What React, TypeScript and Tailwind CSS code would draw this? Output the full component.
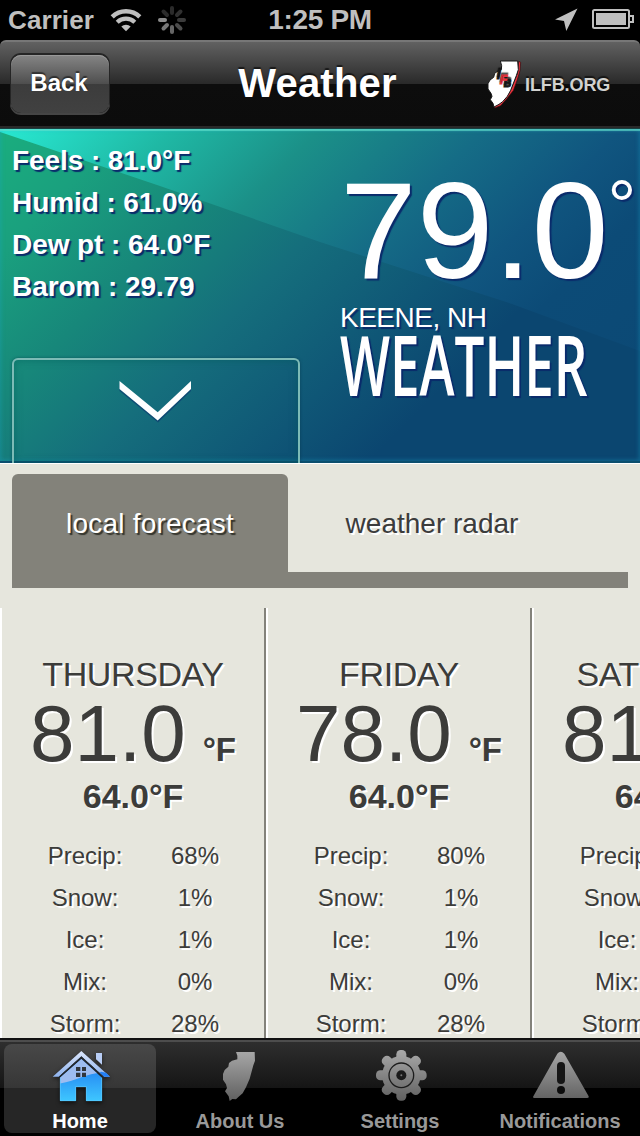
import React from "react";

interface Day {
    name: string;
    high: string;
    low: string;
    details: [string, string][];
}

const conditions = [
    "Feels : 81.0°F",
    "Humid : 61.0%",
    "Dew pt : 64.0°F",
    "Barom : 29.79",
];

const makeDetails = (precip: string): [string, string][] => [
    ["Precip:", precip],
    ["Snow:", "1%"],
    ["Ice:", "1%"],
    ["Mix:", "0%"],
    ["Storm:", "28%"],
];

const days: Day[] = [
    { name: "THURSDAY", high: "81.0", low: "64.0°F", details: makeDetails("68%") },
    { name: "FRIDAY", high: "78.0", low: "64.0°F", details: makeDetails("80%") },
    { name: "SATURDAY", high: "81.0", low: "64.0°F", details: makeDetails("68%") },
];

const STATE_PATH =
    "M708 66H764L765 92L760 106L749 146L738 172L728 190L716 200L708 208L697 207L689 213L686 199L675 184L681 174L678 163L669 149V132L674 120L685 110L687 99L696 92L712 88V77Z";

const StatusBar = () => (
    <div className="grid grid-cols-3 items-center h-10 bg-black text-[#bfbfbf] font-bold">
        <div className="flex items-center pl-2">
            <span className="text-[26px] leading-10 tracking-[0.1px]">Carrier</span>
            <svg className="ml-4 mb-px" width="32" height="24" viewBox="0 0 32 24" fill="none" stroke="#bfbfbf">
                <path d="M2.200 8.800a19.800 19.800 0 0 1 27.600 0" strokeWidth="4.500" />
                <path d="M7.200 14.300a12.600 12.600 0 0 1 17.600 0" strokeWidth="4.200" />
                <path d="M11.300 18.600a6.600 6.600 0 0 1 9.400 0L16 23.300z" fill="#bfbfbf" stroke="none" />
            </svg>
            <svg className="ml-4" width="28" height="28" viewBox="-14 -14 28 28" strokeWidth="4" strokeLinecap="round">
                <path d="M0-7V-12" stroke="#2b2b2b" />
                <path d="M5-5L8.5-8.5" stroke="#303030" />
                <path d="M7 0H12" stroke="#3b3b3b" />
                <path d="M5 5L8.5 8.5" stroke="#4c4c4c" />
                <path d="M0 7V12" stroke="#666" />
                <path d="M-5 5L-8.5 8.5" stroke="#777" />
                <path d="M-7 0H-12" stroke="#8d8d8d" />
                <path d="M-5-5L-8.5-8.5" stroke="#2b2b2b" />
            </svg>
        </div>
        <span className="text-center text-[28px] leading-10 tracking-[-0.3px]">1:25 PM</span>
        <div className="flex items-center justify-end pr-1.5">
            <svg width="24" height="24" viewBox="0 0 24 24" fill="#bfbfbf">
                <path d="M23.500 0.500L12.300 23L10 13L1 11.600Z" />
            </svg>
            <svg className="ml-3.5 -mt-1" width="42" height="22" viewBox="0 0 42 22">
                <rect x="1" y="3" width="36" height="18" rx="1.5" fill="none" stroke="#bfbfbf" strokeWidth="2" />
                <rect x="4" y="6" width="30" height="12" fill="#bfbfbf" />
                <path d="M38 9h3v6h-3" fill="none" stroke="#bfbfbf" strokeWidth="2" />
            </svg>
        </div>
    </div>
);

const Logo = () => (
    <svg width="37" height="51" viewBox="48 30 111 153">
        <path
            d="M146 37L152 40L150 65L142 92L130 125L110 150L92 170L74 177L72 172L104 150L124 118L143 72Z"
            fill="#e8333e"
            stroke="#2a0a0c"
            strokeWidth="2"
        />
        <path
            d="M91 36H143L145 62L139 80L122 124L112 142L98 158L87 166L72 174L69 163L61 152L66 142L63 133L54 120V104L60 93L71 85L74 73L84 66L94 62L95 50Z"
            fill="#fff"
            stroke="#181818"
            strokeWidth="3"
        />
        <g fontFamily="Liberation Sans, Arial, sans-serif" fontWeight="bold" fontStyle="italic" fontSize="40" strokeWidth="3">
            <text x="80" y="91" fill="#191919" stroke="#191919">I</text>
            <text x="101" y="114" fontSize="31" fill="#191919" stroke="#191919">B</text>
            <text x="89" y="104" fontSize="38" fill="#e8333e" stroke="#e8333e">F</text>
        </g>
    </svg>
);

const Header = () => (
    <div className="bg-black">
        <header className="grid grid-cols-[120px_1fr_160px] items-center h-22 rounded-t-md border-t-2 border-b-2 border-t-[#777] border-b-[#292929] bg-[linear-gradient(#616161,#292929_50%,#0d0d0d_50%,#0c0c0c)] [text-shadow:0_-2px_1px_rgba(0,0,0,0.6)]">
            <button className="ml-[11px] w-[98px] h-[58px] rounded-[10px] bg-[linear-gradient(#858585,#4e4e4e_50%,#3c3c3c_50%,#414141)] text-white font-bold text-[24px] leading-[58px] shadow-[0_-1px_0_1px_#252525,0_1px_0_1px_#454545,inset_0_1px_0_#999] [text-shadow:0_-2px_1px_rgba(0,0,0,0.5)]">
                <span className="block -mt-0.5 -ml-0.5">Back</span>
            </button>
            <h1 className="pl-[35px] -mt-0.5 text-center text-[40px] leading-[84px] text-white font-bold tracking-[0.2px]">Weather</h1>
            <div className="flex items-center pl-1.5">
                <Logo />
                <span className="ml-[2px] mt-0.5 text-[18px] font-bold tracking-[-0.1px] text-[#d2d2cf]">ILFB.ORG</span>
            </div>
        </header>
    </div>
);

const Hero = () => (
    <section className="relative flex h-[335px] overflow-hidden text-white bg-[linear-gradient(135deg,#1aae7e,#1aa07e_13%,#17877a_28%,#156e7c_43%,#0f5676_60%,#0b4670_72%)] [text-shadow:2px_2px_1px_#0a2b6b]">
        {/* light sweep across the top, then the glowing edge */}
        <div className="absolute inset-0 [clip-path:polygon(0_0,100%_0,100%_223px,80%_176px,50%_114px,25%_58px,0_4px)] bg-[linear-gradient(135deg,#28ead2,#26dcc6_5%,#1fb8a4_18%,#1b9088_33%,#156c86_50%,#10557f_64%,#0c4b77_74%,#0c4874)]" />
        <div className="absolute inset-0 border-t-1 border-t-[#173f40] border-b-2 border-b-[#0b4f6e] shadow-[inset_0_3px_1px_-1px_rgba(100,225,205,0.7),inset_0_0_4px_1px_rgba(25,165,205,0.35)]" />
        <div className="relative flex flex-col w-[340px] pl-3 pt-3">
            {conditions.map((line) => (
                <p key={line} className="h-[42px] leading-[42px] text-[28px] font-bold tracking-[-0.08px] whitespace-nowrap">
                    {line}
                </p>
            ))}
            <button className="mt-auto flex justify-center w-[288px] h-[105px] rounded-t-md border-2 border-b-0 border-[#7dbbb6] shadow-[0_0_3px_rgba(0,40,60,0.5),inset_0_0_8px_rgba(0,90,90,0.55)]">
                <svg className="mt-[19px] -ml-0.5" width="76" height="46" viewBox="-2 0 76 46">
                    <path d="M0.500 4L39 35.500L72 4V12L39 43.500L0.500 12Z" fill="#0a2b6b" opacity="0.5" />
                    <path d="M0.500 2L38.700 33.300L72 2V10L38.700 41.500L0.500 10Z" fill="#fff" />
                </svg>
            </button>
        </div>
        <div className="relative flex flex-col w-[300px] pt-8">
            <div className="flex h-[140px]">
                <span className="text-[138px] leading-[140px]">79.0</span>
                <span className="-ml-px text-[72px] leading-[91px]">°</span>
            </div>
            <p className="mt-0.5 h-8 text-[28px] leading-8 tracking-[-0.5px] whitespace-nowrap">KEENE, NH</p>
            <p className="-mt-[12px] w-[390px] h-[84px] origin-left scale-x-[0.63] text-[84px] leading-[84px] font-semibold font-['Open_Sans',sans-serif] [text-shadow:3px_2px_1px_#0a2b6b]">
                WEATHER
            </p>
        </div>
    </section>
);

const Tabs = () => (
    <nav className="border-t border-white px-3 pt-2.5 pb-5 text-[28px] leading-[98px] text-center">
        <div className="flex h-[98px]">
            <button className="w-[276px] rounded-t-md bg-[#83827a] text-white tracking-[0.2px] [text-shadow:2px_2px_1px_#33332b]">
                <span className="block pt-px">local forecast</span>
            </button>
            <button className="w-[288px] text-[#3c3c3c] [text-shadow:2px_2px_0_#fff]">
                <span className="block pt-px">weather radar</span>
            </button>
        </div>
        <div className="h-4 bg-[#83827a]" />
    </nav>
);

const DayColumn = ({ day }: { day: Day }) => (
    <article className="flex flex-col items-center shrink-0 w-[266px] pt-[46px] border-l-2 border-l-white border-r-2 border-r-[#83827a] text-[#3c3c3a] [text-shadow:2px_2px_0_#fff]">
        <h2 className="h-10 text-[34px] leading-10 tracking-[-0.4px]">{day.name}</h2>
        <div className="flex items-baseline mt-0.5 h-[76px] leading-[76px]">
            <span className="text-[80px]">{day.high}</span>
            <span className="ml-[17px] text-[33px] font-bold">°F</span>
        </div>
        <p className="mt-1 h-10 text-[34px] leading-10 font-bold">{day.low}</p>
        <dl className="grid grid-cols-[110px_110px] mt-[19px] ml-3.5 text-center text-[24px] leading-[42px]">
            {day.details.map(([label, value]) => (
                <React.Fragment key={label}>
                    <dt>{label}</dt>
                    <dd>{value}</dd>
                </React.Fragment>
            ))}
        </dl>
    </article>
);

const HomeIcon = () => (
    <svg width="60" height="54" viewBox="150 57 180 162" className="drop-shadow-[0_2px_2px_rgba(0,0,0,0.6)]">
        <defs>
            <linearGradient id="home-light" x1="0" y1="0" x2="0" y2="1">
                <stop offset="0" stopColor="#dce6fb" />
                <stop offset="1" stopColor="#8eb3ee" />
            </linearGradient>
            <linearGradient id="home-blue" x1="0" y1="0" x2="0" y2="1">
                <stop offset="0" stopColor="#1c72ee" />
                <stop offset="1" stopColor="#3fc8ff" />
            </linearGradient>
            <clipPath id="home-body">
                <path d="M244 87L306 143V213H258V171H228V213H180V143Z" />
            </clipPath>
        </defs>
        <path d="M288 69H306V104L288 88Z" fill="#b8cdf5" />
        <g clipPath="url(#home-body)">
            <rect x="178" y="85" width="130" height="130" fill="url(#home-blue)" />
            <path d="M178 85H308V127Q272 130 244 142T178 161Z" fill="#9dbcf0" />
        </g>
        <path d="M181 143V212H227V170H259V212H305V143" fill="none" stroke="#5cc9ff" strokeWidth="2" />
        <path d="M244 63L330 140H312L244 79L176 140H158Z" fill="url(#home-light)" />
        <path d="M303 125L318 128L330 140H312L299 128Z" fill="#2380f6" />
        <path d="M177 141L244 81L311 141" fill="none" stroke="#26313f" strokeWidth="3" />
        <path d="M228 111H241V123H228ZM246 111H258V123H246ZM228 128H241V141H228ZM246 128H258V141H246Z" fill="#30353c" />
    </svg>
);

const GrayGradient = ({ id }: { id: string }) => (
    <defs>
        <linearGradient id={id} gradientUnits="userSpaceOnUse" x1="0" y1="60" x2="0" y2="213">
            <stop offset="0" stopColor="#a9a9a9" />
            <stop offset="1" stopColor="#606060" />
        </linearGradient>
    </defs>
);

const AboutIcon = () => (
    <svg width="60" height="54" viewBox="630 57 180 162">
        <GrayGradient id="gray-about" />
        <path d={STATE_PATH} fill="url(#gray-about)" />
    </svg>
);

// one tooth of the gear, repeated every 45 degrees
const GearTeeth = () => (
    <>
        {[0, 45, 90, 135, 180, 225, 270, 315].map((angle) => (
            <rect key={angle} x="229" y="60" width="30" height="40" rx="13" transform={`rotate(${angle} 244 136)`} />
        ))}
    </>
);

const SettingsIcon = () => (
    <svg width="60" height="54" viewBox="150 57 180 162">
        <GrayGradient id="gray-settings" />
        <mask id="gear-mask">
            <g fill="#fff">
                <circle cx="244" cy="136" r="58" />
                <GearTeeth />
            </g>
        </mask>
        <rect x="150" y="57" width="180" height="162" fill="url(#gray-settings)" mask="url(#gear-mask)" />
        <circle cx="244" cy="136" r="37" fill="none" stroke="#1c1c1c" strokeWidth="4" />
        <circle cx="244" cy="136" r="15" fill="#1a1a1a" />
        <circle cx="244" cy="136" r="3" fill="#777" />
    </svg>
);

const NotificationsIcon = () => (
    <svg width="60" height="54" viewBox="630 57 180 162">
        <GrayGradient id="gray-alert" />
        <path d="M712 71Q722 60 733 71L806 199Q808 204 802 204H643Q637 204 640 199Z" fill="url(#gray-alert)" />
        <rect x="711" y="96" width="24" height="66" rx="12" fill="#161616" />
        <circle cx="723" cy="180" r="12" fill="#0c0c0c" />
    </svg>
);

const items = [
    { label: "Home", icon: <HomeIcon />, active: true },
    { label: "About Us", icon: <AboutIcon /> },
    { label: "Settings", icon: <SettingsIcon /> },
    { label: "Notifications", icon: <NotificationsIcon /> },
];

const TabBar = () => (
    <footer className="grid grid-cols-4 h-[98px] border-t-2 border-t-[#111] bg-[linear-gradient(#4d4d4d_2px,#2e2e2e_2px,#151515_48px,#000_48px)] font-bold text-[20px] leading-6">
        {items.map((item) => (
            <button
                key={item.label}
                className={`flex flex-col items-center mx-1 mt-1 mb-1 pt-[5px] rounded-lg ${
                    item.active
                        ? "bg-[linear-gradient(#484848,#363636_44px,#262626_44px)] text-white"
                        : "text-[#999]"
                }`}
            >
                {item.icon}
                <span className="mt-1.5">{item.label}</span>
            </button>
        ))}
    </footer>
);

export default function App() {
    return (
        <div className="flex flex-col w-[640px] h-[1136px] overflow-hidden bg-[#e6e6dd] font-['Liberation_Sans',Arial,sans-serif]">
            <StatusBar />
            <Header />
            <Hero />
            <Tabs />
            <main className="flex h-[430px] overflow-hidden">
                {days.map((day) => (
                    <DayColumn key={day.name} day={day} />
                ))}
            </main>
            <TabBar />
        </div>
    );
}
